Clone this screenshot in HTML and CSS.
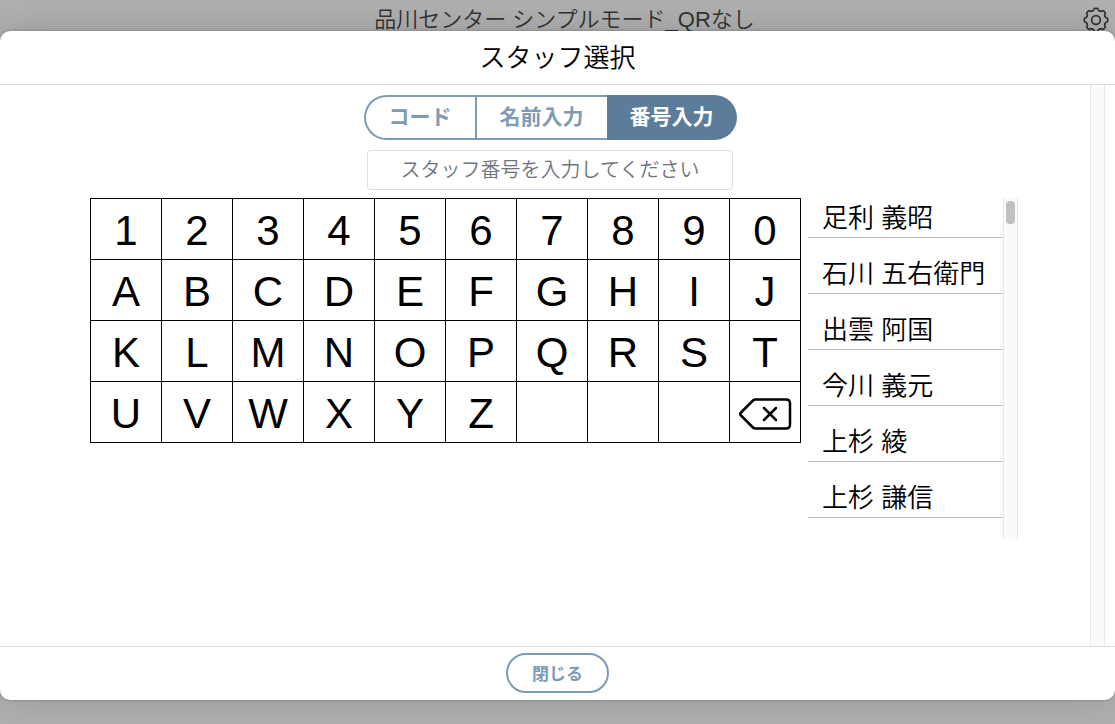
FILE: index.html
```html
<!doctype html>
<html lang="ja">
<head>
  <meta charset="utf-8">
  <meta name="viewport" content="width=device-width, initial-scale=1">
  <title>スタッフ選択</title>
  <link rel="stylesheet" href="styles.css">
</head>
<body>

<header class="appHeader">
  <h1>品川センター シンプルモード_QRなし</h1>
  <button class="settings" type="button" aria-label="設定">
    <svg viewBox="0 0 24 24" width="26" height="26">
      <defs>
        <path id="tooth" d="M8.560 3.690Q9.900 3.300 10.100 2.200Q10.200 1.200 11 1.200H13Q13.800 1.200 13.900 2.200Q14.100 3.300 15.440 3.690"/>
      </defs>
      <use href="#tooth"/>
      <use href="#tooth" transform="rotate(45 12 12)"/>
      <use href="#tooth" transform="rotate(90 12 12)"/>
      <use href="#tooth" transform="rotate(135 12 12)"/>
      <use href="#tooth" transform="rotate(180 12 12)"/>
      <use href="#tooth" transform="rotate(225 12 12)"/>
      <use href="#tooth" transform="rotate(270 12 12)"/>
      <use href="#tooth" transform="rotate(315 12 12)"/>
      <circle cx="12" cy="12" r="4"/>
    </svg>
  </button>
</header>

<div class="overlay">
  <div class="modal" role="dialog" aria-labelledby="modalTitle">
    <div class="modalHeader">
      <h2 id="modalTitle">スタッフ選択</h2>
    </div>

    <div class="modalBody">
      <div class="content">
        <div class="tabs">
          <button type="button">コード</button>
          <button type="button">名前入力</button>
          <button type="button" class="active">番号入力</button>
        </div>
        <input class="staffNumber" type="text" aria-label="スタッフ番号" placeholder="スタッフ番号を入力してください">

        <div class="picker">
          <div class="keyboard">
            <button type="button">1</button>
            <button type="button">2</button>
            <button type="button">3</button>
            <button type="button">4</button>
            <button type="button">5</button>
            <button type="button">6</button>
            <button type="button">7</button>
            <button type="button">8</button>
            <button type="button">9</button>
            <button type="button">0</button>
            <button type="button">A</button>
            <button type="button">B</button>
            <button type="button">C</button>
            <button type="button">D</button>
            <button type="button">E</button>
            <button type="button">F</button>
            <button type="button">G</button>
            <button type="button">H</button>
            <button type="button">I</button>
            <button type="button">J</button>
            <button type="button">K</button>
            <button type="button">L</button>
            <button type="button">M</button>
            <button type="button">N</button>
            <button type="button">O</button>
            <button type="button">P</button>
            <button type="button">Q</button>
            <button type="button">R</button>
            <button type="button">S</button>
            <button type="button">T</button>
            <button type="button">U</button>
            <button type="button">V</button>
            <button type="button">W</button>
            <button type="button">X</button>
            <button type="button">Y</button>
            <button type="button">Z</button>
            <span></span>
            <span></span>
            <span></span>
            <button type="button" aria-label="一文字削除">
              <svg viewBox="0 0 54 34" width="54" height="34">
                <path d="M17.500 2.500H48q4 0 4 4v21q0 4-4 4H17.500q-1.500 0-2.500-1L3 18.500q-1.500-1.500 0-3L15 3.500q1-1 2.500-1z"/>
                <path d="M26 11l12 12M38 11L26 23"/>
              </svg>
            </button>
          </div>

          <div class="staff">
            <ul>
              <li>足利 義昭</li>
              <li>石川 五右衛門</li>
              <li>出雲 阿国</li>
              <li>今川 義元</li>
              <li>上杉 綾</li>
              <li>上杉 謙信</li>
            </ul>
            <div class="track"><div class="thumb"></div></div>
          </div>
        </div>
      </div>
      <div class="track"></div>
    </div>

    <div class="modalFooter">
      <button type="button" class="close">閉じる</button>
    </div>
  </div>
</div>

</body>
</html>
```

FILE: styles.css
```css
*{
  box-sizing: border-box;
}
html,
body{
  height: 100%;
}
body{
  margin: 0;
  overflow: hidden;
  background: #b0b0b0;
  color: #000;
  font-family: "Liberation Sans", "Noto Sans CJK JP", sans-serif;
}
button,
input{
  margin: 0;
  padding: 0;
  font-family: inherit;
}
h1,
h2,
ul{
  margin: 0;
  padding: 0;
  font-weight: 350;
}
.appHeader{
  display: grid;
  grid-template-columns: 46px 1fr 32px;
  align-items: center;
  height: 40px;
  color: #333;
}
.appHeader h1{
  grid-column: 2;
  text-align: center;
  font-size: 22px;
  line-height: 40px;
}
.settings{
  display: flex;
  width: 26px;
  border: 0;
  background: none;
}
.settings svg{
  fill: none;
  stroke: #333;
  stroke-width: 1.6;
  stroke-linecap: round;
}
/* dialog over the page */
.overlay{
  position: absolute;
  inset: 0;
  display: flex;
  padding: 31px 0 24px;
}
.modal{
  flex: 1;
  display: flex;
  flex-direction: column;
  background: #fff;
  border-radius: 10px;
  box-shadow: 0 0 40px rgba(0,0,0,0.15), 0 0 3px rgba(0,0,0,0.3);
}
.modalHeader{
  height: 54px;
  border-bottom: 1px solid #ddd;
  text-align: center;
}
.modalHeader h2{
  padding-top: 1px;
  font-size: 26px;
  line-height: 52px;
}
.modalBody{
  flex: 1;
  display: flex;
  min-height: 0;
  padding-right: 10px;
}
.content{
  flex: 1;
  display: flex;
  flex-direction: column;
  align-items: center;
  padding: 10px 0 0 10px;
}
.track{
  width: 15px;
  border: solid #e8e8e8;
  border-width: 0 1px;
  background: #fafafa;
}
.thumb{
  width: 9px;
  height: 23px;
  margin: 3px 2px;
  border-radius: 4px;
  background: #c1c1c1;
}
.tabs{
  display: flex;
  height: 45px;
}
.tabs button{
  padding: 0 23px 5px;
  border: 2px solid #7f9ab3;
  border-right: 0;
  background: #fff;
  color: #7f9ab3;
  font-size: 21px;
  font-weight: bold;
}
.tabs button:first-child{
  border-radius: 23px 0 0 23px;
}
.tabs button:last-child{
  border-radius: 0 23px 23px 0;
}
.tabs .active{
  border: 0;
  background: #5c7d9a;
  color: #fff;
}
.staffNumber{
  width: 366px;
  height: 40px;
  margin: 10px 0 8px;
  border: 1px solid #ddd;
  border-radius: 4px;
  text-align: center;
  font-size: 20px;
  font-weight: 350;
}
.staffNumber::placeholder{
  color: #6c757d;
}
.picker{
  display: flex;
  align-items: flex-start;
  padding-left: 8px;
}
/* the gaps let the black through as cell lines */
.keyboard{
  display: grid;
  grid-template-columns: repeat(10, 70px);
  grid-auto-rows: 60px;
  gap: 1px;
  padding: 1px;
  background: #000;
}
.keyboard button,
.keyboard span{
  display: flex;
  align-items: center;
  justify-content: center;
  padding-top: 3px;
  border: 0;
  background: #fff;
  color: #000;
  font-size: 42px;
}
.keyboard svg{
  fill: none;
  stroke: #000;
  stroke-width: 2.5;
  stroke-linecap: round;
}
.staff{
  display: flex;
  height: 341px;
  margin-left: 7px;
}
.staff ul{
  width: 195px;
  list-style: none;
}
.staff li{
  height: 40px;
  margin-bottom: 16px;
  padding: 1px 0 0 14px;
  border-bottom: 1px solid #bbb;
  font-size: 26px;
  line-height: 38px;
  white-space: nowrap;
}
.modalFooter{
  display: flex;
  align-items: center;
  justify-content: center;
  height: 54px;
  padding-bottom: 1px;
  border-top: 1px solid #ddd;
}
.close{
  width: 103px;
  height: 40px;
  padding-bottom: 2px;
  border: 2px solid #7f9ab3;
  border-radius: 20px;
  background: #fff;
  color: #7f9ab3;
  font-size: 17px;
  font-weight: bold;
}
```
